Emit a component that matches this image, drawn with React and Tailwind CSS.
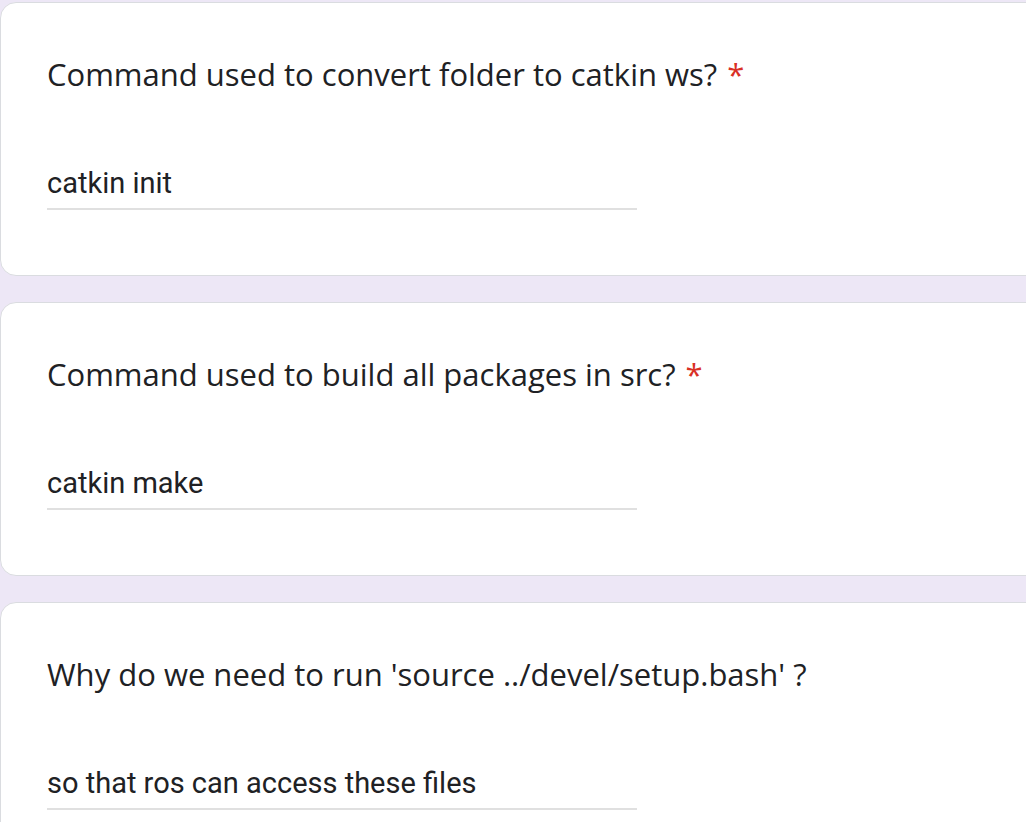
export default function App() {
  const items = [
    { q: "Command used to convert folder to catkin ws?", req: true, a: "catkin init" },
    { q: "Command used to build all packages in src?", req: true, a: "catkin make" },
    { q: "Why do we need to run 'source ../devel/setup.bash' ?", req: false, a: "so that ros can access these files" },
  ];
  return (
    <div className="w-[1026px] h-[822px] overflow-hidden bg-[#ede7f6] pt-[2px]">
      <div className="flex flex-col gap-[26px] w-[1060px]">
        {items.map((it, i) => (
          <div
            key={i}
            className="shrink-0 h-[274px] bg-white border border-[#dadce0] rounded-[16px] pl-[46px] pt-[51px]"
          >
            <div
              className="text-[31px] leading-[40px] text-[#202124] whitespace-nowrap"
              style={{ fontFamily: '"Open Sans", Arial, sans-serif' }}
            >
              {it.q}
              {it.req && <span className="text-[#d93025] ml-[10px]">*</span>}
            </div>
            <div className="mt-[71px] w-[590px] border-b-2 border-[#e0e0e0] pb-[7px]">
              <div
                className="text-[29px] leading-[36px] text-[#202124]"
                style={{ fontFamily: 'Roboto, Arial, sans-serif' }}
              >
                {it.a}
              </div>
            </div>
          </div>
        ))}
      </div>
    </div>
  );
}
